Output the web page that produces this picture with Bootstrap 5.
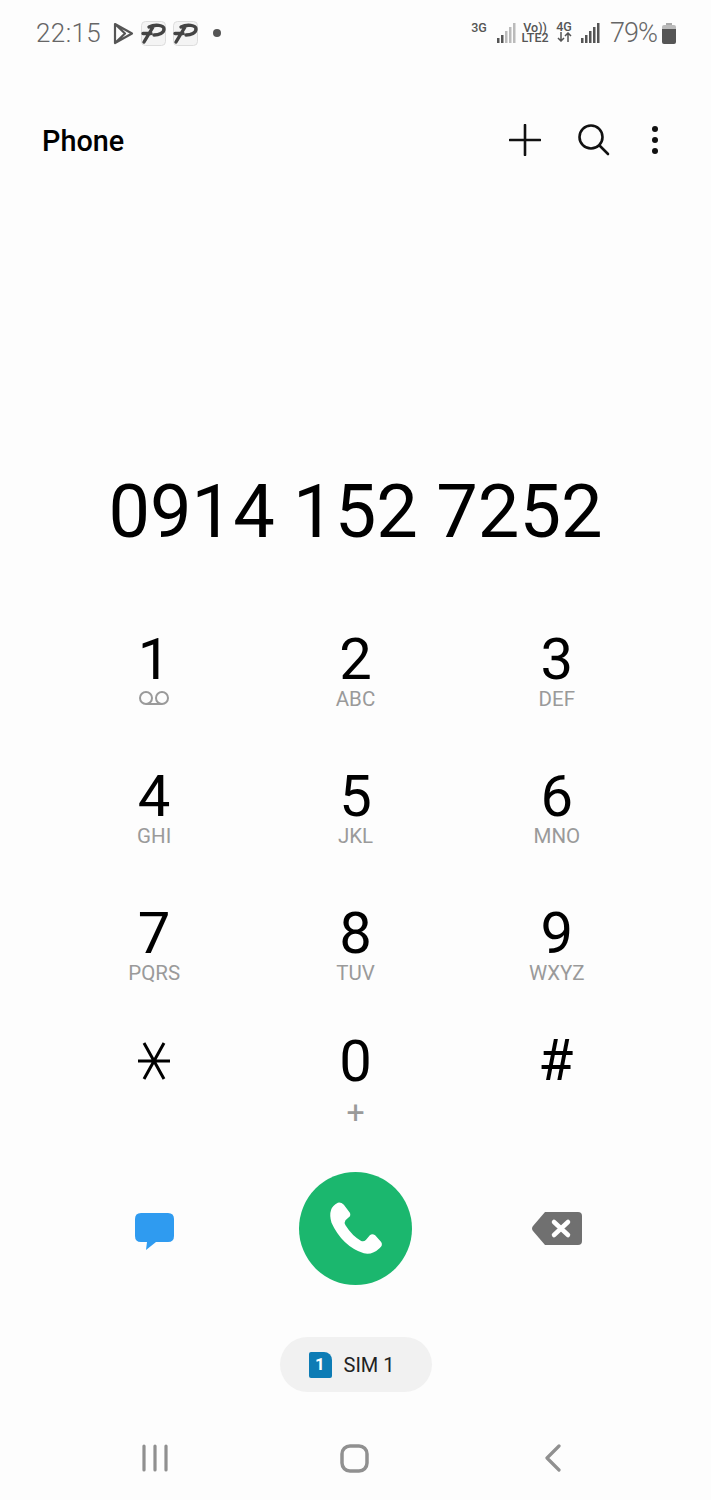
<!DOCTYPE html>
<html lang="en">
<head>
    <meta charset="UTF-8">
    <meta name="viewport" content="width=device-width, initial-scale=1.0">
    <title>Phone</title>

    <!-- Bootstrap CSS -->
    <link href="https://cdn.jsdelivr.net/npm/bootstrap@5.3.0/dist/css/bootstrap.min.css" rel="stylesheet">

    <style>
        body {
            background: #fdfdfd;
            font-family: Roboto, "Liberation Sans", sans-serif;
            color: #000;
            overflow: hidden;
        }
        .status-strip { height: 66px; padding: 0 35px 0 36px; color: #666; }
        .status-clock { font-size: 26px; font-weight: 300; letter-spacing: .4px; margin-right: 12px; }
        .status-pct { font-size: 27px; font-weight: 300; line-height: 1; letter-spacing: -1px; margin-left: 10px; margin-right: 5px; }
        .status-note { width: 25px; height: 25px; margin-right: 7px; }
        .status-tiny { font-size: 12.5px; font-weight: 500; line-height: 10.5px; color: #555; text-align: center; }
        .tiny-lift { margin-top: -10px; width: 16px; margin-right: 10px; }
        .tiny-volte { width: 28px; margin: 0 7px 0 5px; }
        .tiny-four { width: 16px; margin-right: 9px; margin-top: -2px; }
        .tiny-four svg { display: block; margin: 0 auto; }
        .app-head { height: 148px; padding: 0 52px 0 42px; }
        .app-title { font-size: 28.8px; font-weight: 500; margin: 2px 0 0; }
        .head-icons { gap: 38px; }
        .head-search { margin: 0 3px 0 -3px; }
        .dial-number { font-size: 74px; line-height: 88px; margin-top: 254px; font-weight: 400; }
        .keypad { margin-top: 74px; padding: 0 53.5px; }
        .key-cell { height: 137px; }
        .key-digit { font-size: 58px; line-height: 58px; font-weight: 400; color: #000; }
        .key-sub { font-size: 20.5px; line-height: 24px; color: #9a9a9a; margin-top: -1px; }
        .key-sub svg { display: block; margin: 4px auto 0; }
        .last-row { margin-top: -9px; height: 92px; }
        .last-row .key-sub { margin-top: 10px; font-size: 32px; line-height: 24px; }
        .key-star { height: 58px; }
        .key-hash { font-size: 57px; line-height: 58px; font-weight: 400; margin-right: 2px; }
        .call-row { margin-top: 48px; padding: 0 53.5px; }
        .call-btn { width: 113px; height: 113px; background: #1bb76e; }
        .chat-icon { margin-top: 7px; }
        .sim-chip { width: 152px; height: 55px; margin-top: 52px; background: #f1f1f1; font-size: 20px; color: #222; gap: 12px; padding-right: 8px; }
        .sim-card { width: 23px; height: 26px; background: #0d7cb5; color: #fff; font-size: 17px; font-weight: 700; border-radius: 2px 8px 2px 2px; }
        .nav-strip { height: 40px; margin-top: 46px; padding: 0 53.5px; }
        .nav-bars { margin-left: 2px; }
        .nav-home { margin-right: 2px; }
        .nav-back { margin-right: 7px; }
    </style>
</head>
<body>
    <!-- Status bar -->
    <div class="status-strip d-flex align-items-center">
        <span class="status-clock">22:15</span>
        <svg class="status-note" style="width:21px;height:23px" viewBox="0 0 21 23" fill="none" stroke="#555" stroke-width="2.200" stroke-linejoin="round"><path d="M2 2 L19 11.500 L2 21 Z M2 2 L12 11.500 L2 21"/></svg>
        <svg class="status-note" viewBox="0 0 25 25" fill="none"><rect x=".5" y=".5" width="24" height="24" rx="4" fill="#f4f4f4" stroke="#ddd"/><path d="M3 21 L12 6 M2 12.500 H10 M8 6 C14 3 23 4 23 8 C23 12 18 14 13 14" stroke="#444" stroke-width="3.400" stroke-linecap="round"/></svg>
        <svg class="status-note" viewBox="0 0 25 25" fill="none"><rect x=".5" y=".5" width="24" height="24" rx="4" fill="#f4f4f4" stroke="#ddd"/><path d="M3 21 L12 6 M2 12.500 H10 M8 6 C14 3 23 4 23 8 C23 12 18 14 13 14" stroke="#444" stroke-width="3.400" stroke-linecap="round"/></svg>
        <span class="rounded-circle ms-2" style="width:8px;height:8px;background:#555"></span>

        <div class="ms-auto d-flex align-items-center">
            <div class="status-tiny tiny-lift">3G</div>
            <svg width="19" height="20" viewBox="0 0 19 20"><rect x="0" y="15" width="2.500" height="5" fill="#555"/><rect x="4" y="12" width="2.500" height="8" fill="#555"/><rect x="8" y="8" width="2.500" height="12" fill="#bbb"/><rect x="12" y="4" width="2.500" height="16" fill="#bbb"/><rect x="16" y="0" width="2.500" height="20" fill="#bbb"/></svg>
            <div class="status-tiny tiny-volte"><div>Vo))</div><div>LTE2</div></div>
            <div class="status-tiny tiny-four">
                <div>4G</div>
                <svg width="15" height="10" viewBox="0 0 15 10" fill="none" stroke="#555" stroke-width="1.500"><path d="M4 0 V9 M1 6 L4 9 L7 6 M11 10 V1 M8 4 L11 1 L14 4"/></svg>
            </div>
            <svg width="19" height="20" viewBox="0 0 19 20" fill="#555"><rect x="0" y="15" width="2.500" height="5"/><rect x="4" y="12" width="2.500" height="8"/><rect x="8" y="8" width="2.500" height="12"/><rect x="12" y="4" width="2.500" height="16"/><rect x="16" y="0" width="2.500" height="20"/></svg>
            <span class="status-pct">79%</span>
            <svg width="14" height="21" viewBox="0 0 14 21"><path d="M4 0 H10 V2 H4 Z" fill="#aaa"/><path d="M2 2 H12 Q14 2 14 4 V6 H0 V4 Q0 2 2 2 Z" fill="#bbb"/><path d="M0 6 H14 V19 Q14 21 12 21 H2 Q0 21 0 19 Z" fill="#555"/></svg>
        </div>
    </div>

    <!-- App header -->
    <div class="app-head d-flex align-items-center justify-content-between">
        <h1 class="app-title">Phone</h1>
        <div class="head-icons d-flex align-items-center">
            <svg width="32" height="32" viewBox="0 0 32 32" stroke="#111" stroke-width="2.600" stroke-linecap="round"><path d="M16 1 V31 M1 16 H31"/></svg>
            <svg class="head-search" width="34" height="34" viewBox="0 0 34 34" fill="none" stroke="#111" stroke-width="2.600" stroke-linecap="round"><circle cx="15" cy="14" r="11.500"/><path d="M23.500 22.500 L32 31"/></svg>
            <svg width="8" height="30" viewBox="0 0 8 30" fill="#111"><circle cx="4" cy="4" r="3"/><circle cx="4" cy="15" r="3"/><circle cx="4" cy="26" r="3"/></svg>
        </div>
    </div>

    <!-- Number -->
    <div class="dial-number text-center">0914 152 7252</div>

    <!-- Keypad -->
    <div class="keypad">
        <div class="row g-0 text-center" id="keys"></div>
        <div class="row g-0 text-center last-row">
            <div class="col-4">
                <div class="key-star d-flex justify-content-center align-items-center">
                    <svg width="34" height="38" viewBox="0 0 34 38" stroke="#000" stroke-width="3"><path d="M1 19 H33 M7 1 L27 37 M27 1 L7 37"/></svg>
                </div>
            </div>
            <div class="col-4">
                <div class="key-digit">0</div>
                <div class="key-sub">+</div>
            </div>
            <div class="col-4">
                <div class="key-hash">#</div>
            </div>
        </div>
    </div>

    <!-- Actions -->
    <div class="call-row row g-0 align-items-center text-center">
        <div class="col-4">
            <svg class="chat-icon" width="39" height="38" viewBox="0 0 39 38"><path d="M6 0 H33 Q39 0 39 6 V23 Q39 29 33 29 H21 L11 37 L12 29 H6 Q0 29 0 23 V6 Q0 0 6 0 Z" fill="#2f9bf0"/></svg>
        </div>
        <div class="col-4 d-flex justify-content-center">
            <div class="call-btn rounded-circle d-flex align-items-center justify-content-center">
                <svg width="57" height="55" viewBox="680 545 170 165"><path d="M712 550 Q722 548 730 556 L748 580 Q752 588 745 594 L735 603 Q730 610 735 618 Q755 650 782 665 Q790 668 796 662 L808 648 Q815 642 824 648 L842 668 Q848 678 838 686 Q815 708 790 702 Q725 680 693 610 Q680 565 712 550 Z" fill="#fff"/></svg>
            </div>
        </div>
        <div class="col-4">
            <svg width="50" height="33" viewBox="0 0 50 33"><path d="M13 0 H46 Q50 0 50 4 V29 Q50 33 46 33 H13 L1 19 Q-1 16.500 1 14 Z" fill="#707070"/><path d="M22 10 L36 23 M36 10 L22 23" stroke="#fff" stroke-width="4.500" stroke-linecap="round"/></svg>
        </div>
    </div>

    <!-- SIM -->
    <div class="d-flex justify-content-center">
        <div class="sim-chip rounded-pill d-flex align-items-center justify-content-center">
            <span class="sim-card d-flex align-items-center justify-content-center">1</span>
            <span>SIM 1</span>
        </div>
    </div>

    <!-- Nav bar -->
    <div class="nav-strip row g-0 align-items-center text-center">
        <div class="col-4">
            <svg class="nav-bars" width="28" height="28" viewBox="0 0 28 28" stroke="#909090" stroke-width="3.200" stroke-linecap="round"><path d="M3 2 V26 M14 2 V26 M25 2 V26"/></svg>
        </div>
        <div class="col-4">
            <svg class="nav-home" width="29" height="29" viewBox="0 0 29 29" fill="none" stroke="#909090" stroke-width="3.500"><rect x="2" y="2" width="25" height="25" rx="8"/></svg>
        </div>
        <div class="col-4">
            <svg class="nav-back" width="18" height="28" viewBox="0 0 18 28" fill="none" stroke="#909090" stroke-width="3.200" stroke-linecap="round" stroke-linejoin="round"><path d="M15 2 L3 14 L15 26"/></svg>
        </div>
    </div>

    <script>
        // Teclas 1-9, a última linha fica fixa no HTML
        const teclas = [
            ['1', ''], ['2', 'ABC'], ['3', 'DEF'],
            ['4', 'GHI'], ['5', 'JKL'], ['6', 'MNO'],
            ['7', 'PQRS'], ['8', 'TUV'], ['9', 'WXYZ']
        ];
        const correio = '<svg width="32" height="15" viewBox="0 0 32 15" fill="none" stroke="#9a9a9a" stroke-width="2"><circle cx="8" cy="7" r="6"/><circle cx="24" cy="7" r="6"/><path d="M8 13 H24"/></svg>';
        const container = document.getElementById('keys');
        teclas.forEach(tecla => {
            const col = document.createElement('div');
            col.classList.add('col-4', 'key-cell');
            col.innerHTML = `<div class="key-digit">${tecla[0]}</div><div class="key-sub">${tecla[1] || correio}</div>`;
            container.appendChild(col);
        });
    </script>

    <!-- Bootstrap JS -->
    <script src="https://cdn.jsdelivr.net/npm/bootstrap@5.3.0/dist/js/bootstrap.bundle.min.js"></script>
</body>
</html>
